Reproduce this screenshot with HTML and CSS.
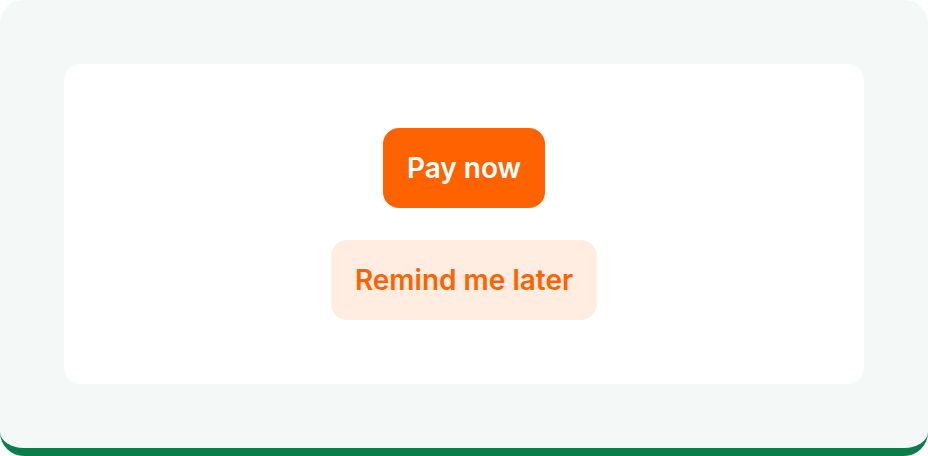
FILE: index.html
```html
<!DOCTYPE html>
<html>
<head>
<meta charset="utf-8">
<link rel="stylesheet" href="styles.css">
</head>
<body>
<div class="frame">
  <div class="card">
    <button class="btn btn-primary">Pay now</button>
    <button class="btn btn-secondary">Remind me later</button>
  </div>
</div>
</body>
</html>
```

FILE: styles.css
```css
html, body {
  margin: 0;
  padding: 0;
  background: #ffffff;
}
.frame {
  box-sizing: border-box;
  width: 928px;
  height: 456px;
  padding: 64px;
  background: #f4f8f6;
  border-radius: 24px;
  border-bottom: 8px solid #0a7d4a;
}
.card {
  box-sizing: border-box;
  height: 320px;
  background: #ffffff;
  border-radius: 16px;
  display: flex;
  flex-direction: column;
  align-items: center;
  justify-content: center;
  gap: 32px;
}
.btn {
  border: none;
  border-radius: 16px;
  height: 80px;
  padding: 0 24px;
  font-family: Inter, "Noto Sans", sans-serif;
  font-weight: 600;
  font-size: 28px;
  line-height: 32px;
  cursor: pointer;
}
.btn-primary {
  background: #ff6200;
  color: #ffffff;
}
.btn-secondary {
  background: #ffede1;
  color: #ff6200;
}
```
